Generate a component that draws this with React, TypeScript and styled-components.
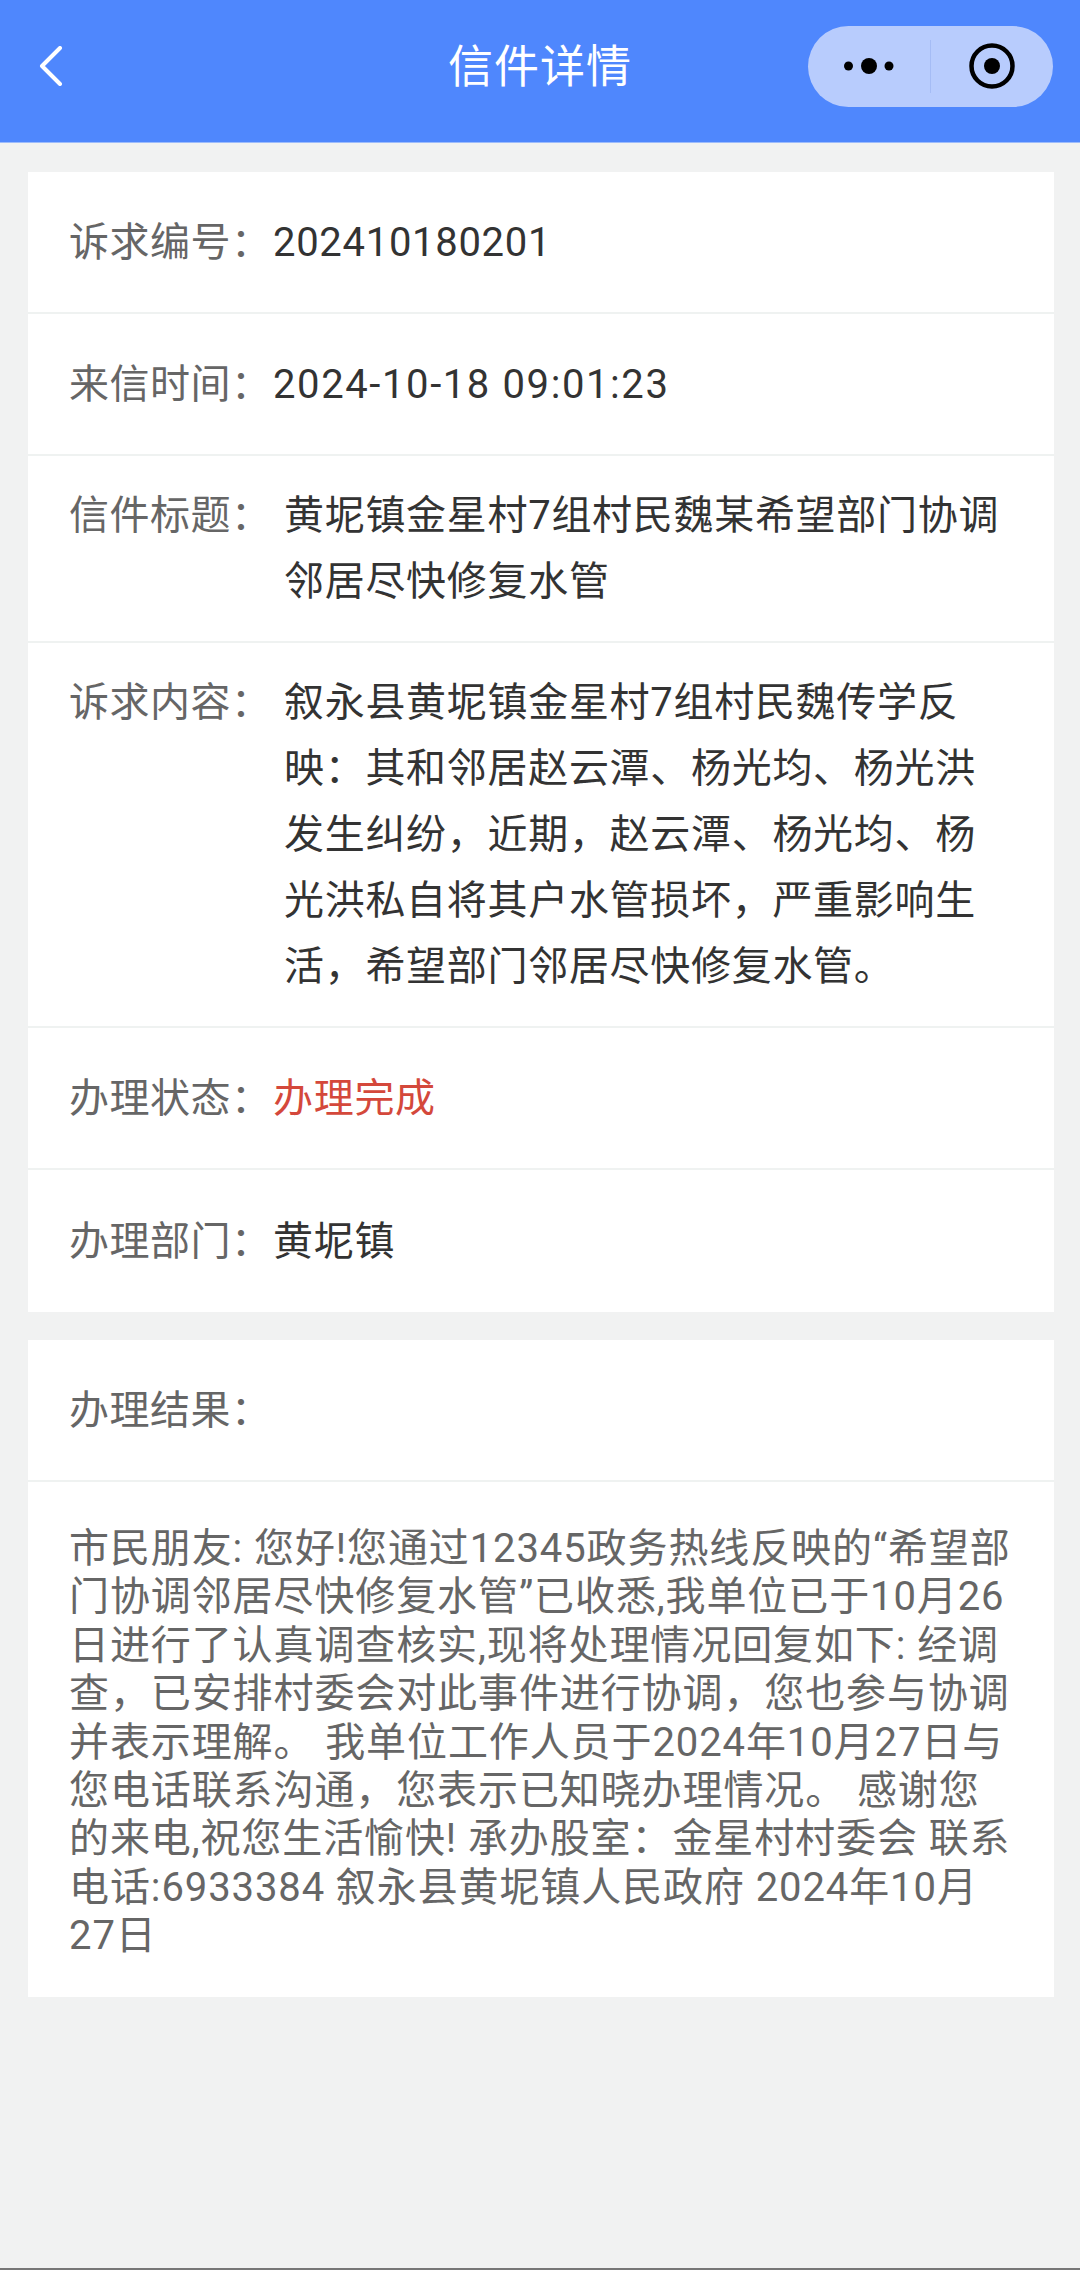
import React from "react";
import styled, { createGlobalStyle } from "styled-components";

const GlobalStyle = createGlobalStyle`
  html, body {
    margin: 0;
    padding: 0;
    background: #f1f2f2;
  }
  * {
    box-sizing: border-box;
  }
`;

const Page = styled.div`
  width: 1080px;
  height: 2270px;
  display: flex;
  flex-direction: column;
  background: #f1f2f2;
  font-family: Roboto, "Noto Sans CJK SC", sans-serif;
  font-size: 40px;
  letter-spacing: 0.5px;
`;

const Header = styled.header`
  height: 143px;
  flex-shrink: 0;
  display: grid;
  grid-template-columns: 1fr auto 1fr;
  align-items: center;
  padding: 0 27px 10px 27px;
  background: #4f87fd;
  border-bottom: 1px solid #9dbcfc;
`;

const BackIcon = styled.svg`
  width: 24px;
  height: 40px;
  margin-left: 12px;
  display: block;
`;

const Title = styled.h1`
  margin: 4px 0 0;
  font-size: 45px;
  font-weight: 400;
  letter-spacing: 1px;
  line-height: 50px;
  color: #fff;
`;

const Capsule = styled.div`
  justify-self: end;
  width: 245px;
  height: 81px;
  display: flex;
  align-items: center;
  border-radius: 41px;
  background: #b8ccfd;
`;

const CapsuleSide = styled.div`
  width: 122px;
  display: flex;
  align-items: center;
  justify-content: center;
`;

const CapsuleDivider = styled.div`
  width: 1px;
  height: 53px;
  background: #a5bcf5;
`;

const Main = styled.main`
  display: flex;
  flex-direction: column;
  gap: 28px;
  padding: 29px 26px 0 28px;
`;

const Card = styled.section`
  background: #fff;
`;

const Row = styled.div<{ $tall?: boolean }>`
  display: flex;
  align-items: ${({ $tall }) => ($tall ? "flex-start" : "center")};
  min-height: 142px;
  padding: ${({ $tall }) => ($tall ? "27px 42px 26px 41px" : "1px 42px 0 41px")};
  line-height: 66px;
  border-bottom: 2px solid #eff2f1;

  &:last-child {
    border-bottom: none;
  }
`;

const Label = styled.span<{ $tall?: boolean }>`
  flex-shrink: 0;
  width: ${({ $tall }) => ($tall ? 215 : 204)}px;
  color: #666;
`;

const Value = styled.span<{ $status?: boolean; $wide?: boolean }>`
  color: ${({ $status }) => ($status ? "#d4483b" : "#333")};
  letter-spacing: ${({ $wide }) => ($wide ? "1.6px" : "0.7px")};
`;

const ResultBody = styled.p`
  margin: 0;
  padding: 43px 42px 36px 41px;
  color: #666;
  letter-spacing: 0.9px;
  line-height: 48.4px;
`;

const BottomLine = styled.div`
  margin-top: auto;
  height: 2px;
  background: #777;
`;

// full-width punctuation, as the page shows it
const COLON = "\uFF1A";
const COMMA = "\uFF0C";

const complaint = `叙永县黄坭镇金星村7组村民魏传学反映${COLON}其和邻居赵云潭、杨光均、杨光洪发生纠纷${COMMA}近期${COMMA}赵云潭、杨光均、杨光洪私自将其户水管损坏${COMMA}严重影响生活${COMMA}希望部门邻居尽快修复水管。`;

const result = `市民朋友: 您好!您通过12345政务热线反映的“希望部门协调邻居尽快修复水管”已收悉,我单位已于10月26日进行了认真调查核实,现将处理情况回复如下: 经调查${COMMA}已安排村委会对此事件进行协调${COMMA}您也参与协调并表示理解。 我单位工作人员于2024年10月27日与您电话联系沟通${COMMA}您表示已知晓办理情况。 感谢您的来电,祝您生活愉快! 承办股室${COLON}金星村村委会 联系电话:6933384 叙永县黄坭镇人民政府 2024年10月27日`;

const App = () => {
  return (
    <Page>
      <GlobalStyle />
      <Header>
        <BackIcon viewBox="0 0 24 40" fill="none">
          <path d="M21 2 L3 20 L21 38" stroke="#fff" strokeWidth="4" strokeLinecap="round" strokeLinejoin="round" />
        </BackIcon>
        <Title>信件详情</Title>
        <Capsule>
          <CapsuleSide>
            <svg width="50" height="18" viewBox="0 0 50 18">
              <circle cx="4.5" cy="9" r="4.5" fill="#000" />
              <circle cx="25" cy="9" r="8" fill="#000" />
              <circle cx="45" cy="9" r="4.5" fill="#000" />
            </svg>
          </CapsuleSide>
          <CapsuleDivider />
          <CapsuleSide>
            <svg width="46" height="46" viewBox="0 0 46 46">
              <circle cx="23" cy="23" r="20.5" fill="none" stroke="#000" strokeWidth="4.5" />
              <circle cx="23" cy="23" r="8" fill="#000" />
            </svg>
          </CapsuleSide>
        </Capsule>
      </Header>
      <Main>
        <Card>
          <Row>
            <Label>诉求编号{COLON}</Label>
            <Value>202410180201</Value>
          </Row>
          <Row>
            <Label>来信时间{COLON}</Label>
            <Value $wide>2024-10-18 09:01:23</Value>
          </Row>
          <Row $tall>
            <Label $tall>信件标题{COLON}</Label>
            <Value>黄坭镇金星村7组村民魏某希望部门协调邻居尽快修复水管</Value>
          </Row>
          <Row $tall>
            <Label $tall>诉求内容{COLON}</Label>
            <Value>{complaint}</Value>
          </Row>
          <Row>
            <Label>办理状态{COLON}</Label>
            <Value $status>办理完成</Value>
          </Row>
          <Row>
            <Label>办理部门{COLON}</Label>
            <Value>黄坭镇</Value>
          </Row>
        </Card>
        <Card>
          <Row>
            <Label>办理结果{COLON}</Label>
          </Row>
          <ResultBody>{result}</ResultBody>
        </Card>
      </Main>
      <BottomLine />
    </Page>
  );
};

export default App;
